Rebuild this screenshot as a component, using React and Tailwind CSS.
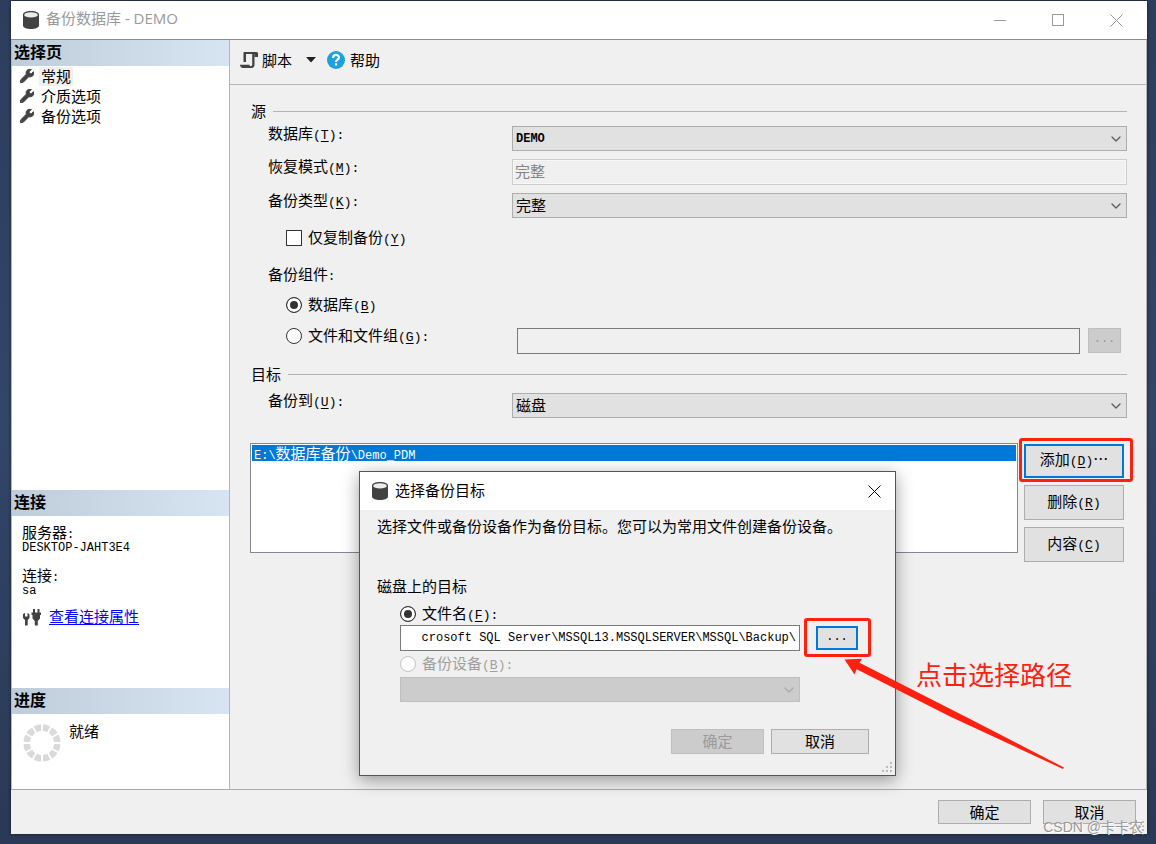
import React from "react";
import { FaWrench } from "react-icons/fa";
import { ChevronDown } from "lucide-react";

const HALF = "font-['Liberation_Mono','Noto_Sans_CJK_SC',monospace] text-[12px]";

function Half({ children }) {
  return <span className={HALF}>{children}</span>;
}

function Key({ k, colon = false }) {
  return (
    <span className="font-['Liberation_Mono',monospace] text-[13px]">
      (<span className="underline underline-offset-2">{k}</span>){colon ? ":" : ""}
    </span>
  );
}

function DatabaseIcon() {
  return (
    <svg width="16" height="18" viewBox="0 0 16 18" aria-hidden="true">
      <path d="M0 3.500C0 1.300 3.500 0 8 0s8 1.300 8 3.500v11C16 16.700 12.500 18 8 18s-8-1.300-8-3.500z" fill="#424242" />
      <ellipse cx="8" cy="3.900" rx="6.800" ry="2.700" fill="#ececec" />
    </svg>
  );
}

function ScriptIcon() {
  return (
    <svg width="18" height="18" viewBox="0 0 18 18" aria-hidden="true">
      <path d="M4 1h12.500c1 0 1.500.8 1.500 1.800V6h-3.500V3H6v8H3.500V2.500C3.500 1.500 3.500 1 4 1z" fill="#424242" />
      <path d="M12.200 3h2.300v10.500c0 2-1 3.500-3 3.500H3c-1.800 0-3-1.200-3-3.200h9.500c0 .8.600 1.400 1.400 1.400s1.300-.5 1.300-1.400z" fill="#424242" />
    </svg>
  );
}

function PlugsIcon() {
  return (
    <svg width="18" height="17" viewBox="0 0 18 17" fill="#424242" aria-hidden="true">
      <path d="M0 5l2-1v3.500h2.500V4l2 1.200V9L4.700 11v5.500H2V11L0 9z" />
      <path d="M10 0h2v3.500h2.500V0h2v3.500H18V6h-1v3.500L14.800 12v4.500h-3V12L9.500 9.500V6h-1V3.500H10z" />
    </svg>
  );
}

function Ring() {
  const pieces = Array.from({ length: 12 }, (_, i) => i * 30);
  return (
    <svg width="38" height="38" viewBox="-19 -19 38 38" aria-hidden="true">
      {pieces.map((a) => (
        <path key={a} d="M-2.200-11.800L-3.900-18Q0-19.400 3.900-18L2.200-11.800Q0-12.300-2.200-11.800z" fill="#dadada" transform={`rotate(${a + 15})`} />
      ))}
    </svg>
  );
}

function Grip() {
  return (
    <svg width="11" height="11" viewBox="0 0 11 11" fill="#bcbcbc" aria-hidden="true">
      <path d="M8 0h2v2H8zM4 4h2v2H4zM8 4h2v2H8zM0 8h2v2H0zM4 8h2v2H4zM8 8h2v2H8z" />
    </svg>
  );
}

function CloseIcon() {
  return (
    <svg width="13" height="13" viewBox="0 0 13 13" stroke="currentColor" aria-hidden="true">
      <path d="M.5.5l12 12M12.500.5l-12 12" />
    </svg>
  );
}

function Combo({ id, value, disabled = false, half = false, label }) {
  return (
    <div className="relative min-w-0 flex-1">
      <select
        id={id}
        aria-label={label}
        disabled={disabled}
        className={
          "block h-[25px] w-full appearance-none border pl-[3px] leading-[22px] text-black " +
          (disabled ? "border-[#bfbfbf] bg-[#cccccc] " : "border-[#adadad] bg-[#e1e1e1] ") +
          (half ? "font-['Liberation_Mono',monospace] text-[12px] font-bold" : "pb-0.5")
        }
      >
        <option>{value}</option>
      </select>
      <ChevronDown
        size={16}
        strokeWidth={2}
        className={"pointer-events-none absolute right-[3px] top-[5px] " + (disabled ? "text-[#aaaaaa]" : "text-[#606060]")}
      />
    </div>
  );
}

function Radio({ name, checked = false, disabled = false, children }) {
  return (
    <label className={"flex h-4 items-center gap-1.5 " + (disabled ? "text-[#a0a0a0]" : "")}>
      <input
        type="radio"
        name={name}
        defaultChecked={checked}
        disabled={disabled}
        className="size-4 shrink-0 appearance-none rounded-full border border-[#333333] bg-white checked:bg-[#333333] checked:shadow-[inset_0_0_0_3px_white] disabled:border-[#c4c4c4]"
      />
      <span>{children}</span>
    </label>
  );
}

function Push({ className = "", disabled = false, focus = false, label, children }) {
  return (
    <button
      type="button"
      disabled={disabled}
      aria-label={label}
      className={
        "flex items-center justify-center pb-0.5 " +
        (disabled
          ? "border border-[#bfbfbf] bg-[#cccccc] text-[#9a9a9a] "
          : focus
            ? "border-2 border-[#0078d7] bg-[#e1e1e1] "
            : "border border-[#adadad] bg-[#e1e1e1] ") +
        className
      }
    >
      {children}
    </button>
  );
}

function SideHeading({ children }) {
  return (
    <h2 className="h-[26px] shrink-0 bg-linear-to-r from-[#bfcddb] to-[#d7e4f2] pl-0.5 text-[16px] font-bold leading-[22px]">
      {children}
    </h2>
  );
}

function GroupHeading({ children }) {
  return (
    <div className="flex h-[17px] items-center gap-[7px] pl-px">
      <h3 className="pb-0.5">{children}</h3>
      <div className="h-px flex-1 bg-[#b4b4b4]" />
    </div>
  );
}

function Field({ id, label, k, children }) {
  return (
    <div className="flex items-start">
      <label htmlFor={id} className="w-[262px] shrink-0 pl-[18px]">
        {label}
        <Key k={k} colon />
      </label>
      {children}
    </div>
  );
}

function Sidebar() {
  return (
    <aside className="flex w-[219px] shrink-0 flex-col border-x border-[#b5b5bb] bg-white">
      <SideHeading>选择页</SideHeading>
      <nav className="flex flex-1 flex-col">
        {["常规", "介质选项", "备份选项"].map((t, i) => (
          <a key={t} href="#page" className="flex h-5 items-center gap-[5px] pl-2">
            <FaWrench size={14} stroke="currentColor" strokeWidth={36} className="text-[#424242]" />
            <span className={"px-0.5 pb-0.5 leading-[17px] " + (i === 0 ? "bg-[#f0f0f0]" : "")}>{t}</span>
          </a>
        ))}
      </nav>
      <SideHeading>连接</SideHeading>
      <section className="h-[172px] pl-2.5 pt-[9px]">
        <p className="h-4">服务器<Half>:</Half></p>
        <p className={HALF + " h-[14px] leading-[15px]"}>DESKTOP-JAHT3E4</p>
        <p className="mt-[13px] h-4">连接<Half>:</Half></p>
        <p className={HALF + " h-[14px] leading-[15px]"}>sa</p>
        <div className="mt-[11px] flex h-4 items-center gap-2 pl-px">
          <PlugsIcon />
          <a href="#properties" className="pb-[3px] text-[#0000ff] underline underline-offset-2">查看连接属性</a>
        </div>
      </section>
      <SideHeading>进度</SideHeading>
      <section className="flex h-[75px] items-start gap-2 pl-[11px] pt-[10px]">
        <Ring />
        <p className="leading-[14px]">就绪</p>
      </section>
    </aside>
  );
}

function TargetDialog() {
  return (
    <div role="dialog" aria-label="选择备份目标" className="absolute left-[348px] top-[470px] w-[537px] border border-[#555555] bg-[#f0f0f0] shadow-[0_4px_16px_rgba(0,0,0,0.38)]">
      <header className="flex h-[38px] items-center bg-white pl-3 pr-[14px]">
        <DatabaseIcon />
        <h2 className="ml-[7px] flex-1 pb-[3px]">选择备份目标</h2>
        <button type="button" aria-label="关闭"><CloseIcon /></button>
      </header>
      <div className="pb-[21px] pl-[17px] pr-[26px] pt-[9px]">
        <p className="h-4 whitespace-nowrap">选择文件或备份设备作为备份目标。您可以为常用文件创建备份设备。</p>
        <p className="mt-11 h-4">磁盘上的目标</p>
        <div className="mt-[11px] pl-[23px]">
          <Radio name="target" checked>文件名<Key k="F" colon /></Radio>
          <div className="mt-[3px] flex items-center gap-4">
            <input
              aria-label="文件名"
              defaultValue="crosoft SQL Server\MSSQL13.MSSQLSERVER\MSSQL\Backup\"
              className="h-[26px] w-[400px] border border-[#7a7a7a] bg-white pr-[3px] text-right font-['Liberation_Mono',monospace] text-[12px]"
            />
            <div className="relative">
              <Push focus label="浏览" className="h-[24px] w-[42px]"><Half>...</Half></Push>
              <div className="pointer-events-none absolute -bottom-[7px] -left-[12px] -right-[13px] -top-[8px] rounded-[3px] border-3 border-[#ff2010]" />
            </div>
          </div>
          <div className="mt-[5px]">
            <Radio name="target" disabled>备份设备<Key k="B" colon /></Radio>
          </div>
          <div className="mt-[5px] flex w-[400px]">
            <Combo label="备份设备" value="" disabled />
          </div>
        </div>
        <div className="mt-[27px] flex justify-end gap-[7px]">
          <Push disabled className="h-[25px] w-[93px]">确定</Push>
          <Push className="h-[25px] w-[98px]">取消</Push>
        </div>
      </div>
      <div className="absolute bottom-[2px] right-[2px]"><Grip /></div>
      <svg width="226" height="118" viewBox="0 0 226 118" className="pointer-events-none absolute left-[480px] top-[183px]" aria-hidden="true">
        <path d="M4.500 4.500L22 3.700L19.500 7.700L130 64L224 112.500L223 114L110 61.500L16.700 14.300L14.500 19.500z" fill="#ff2010" />
      </svg>
      <p className="absolute left-[556px] top-[186px] whitespace-nowrap text-[26px] leading-[32px] text-[#ff2010]">点击选择路径</p>
    </div>
  );
}

export default function App() {
  return (
    <div className="flex min-h-screen bg-linear-to-b from-[#2d3d5c] via-[#32466a] to-[#2a3955] pb-2.5 pl-[11px] pr-[9px] pt-px font-['Noto_Sans_CJK_SC',sans-serif] text-[15px] leading-[13px] text-black">
      <div className="relative flex min-w-0 flex-1 flex-col bg-[#f0f0f0] shadow-[0_0_3px_rgba(0,0,0,0.6)]">
        <header className="flex h-[39px] shrink-0 items-center border-b border-[#8c8c8c] bg-white pl-3 pr-6 text-[#999999]">
          <DatabaseIcon />
          <h1 className="ml-[7px] flex-1 pb-[3px] font-['Open_Sans','Noto_Sans_CJK_SC',sans-serif]">备份数据库 - DEMO</h1>
          <div className="flex items-center gap-[46px]">
            <button type="button" aria-label="最小化" className="flex h-[13px] w-3 items-center"><span className="h-px w-full bg-[#999999]" /></button>
            <button type="button" aria-label="最大化" className="size-3 border border-[#999999]" />
            <button type="button" aria-label="关闭"><CloseIcon /></button>
          </div>
        </header>
        <div className="flex flex-1 border-b border-[#aaaaaa]">
          <Sidebar />
          <main className="min-w-0 flex-1 border-r border-[#b5b5bb]">
            <div className="flex h-[45px] items-center border-b border-[#b5b5bb] pb-1 pl-2.5">
              <button type="button" className="flex items-center gap-1"><ScriptIcon /><span className="pb-0.5">脚本</span></button>
              <button type="button" aria-label="脚本选项" className="ml-[14px]">
                <svg width="10" height="6" viewBox="0 0 10 6" aria-hidden="true"><path d="M0 0h10L5 5.500z" fill="#222222" /></svg>
              </button>
              <button type="button" className="ml-[11px] flex items-center gap-[5px]">
                <svg width="18" height="18" viewBox="0 0 18 18" fill="none" aria-hidden="true">
                  <circle cx="9" cy="9" r="9" fill="#1ba1e2" />
                  <path d="M6 7c0-4 6-4 6-.5C12 8.700 9 8.500 9 11" stroke="#fff" strokeWidth="2.200" />
                  <path d="M7.900 12.300h2.200v2.200H7.900z" fill="#fff" />
                </svg>
                <span className="pb-0.5">帮助</span>
              </button>
            </div>
            <form className="pb-5 pl-5 pr-[19px] pt-[18px]">
              <GroupHeading>源</GroupHeading>
              <div className="mt-1.5 flex flex-col gap-2">
                <Field id="db" label="数据库" k="T"><Combo id="db" value="DEMO" half /></Field>
                <Field id="mode" label="恢复模式" k="M">
                  <input id="mode" disabled defaultValue="完整" className="h-[26px] min-w-0 flex-1 border border-[#cccccc] bg-[#f0f0f0] px-0.5 pb-1 text-[#838383] shadow-[inset_0_0_0_1px_#f8f8f8]" />
                </Field>
                <Field id="kind" label="备份类型" k="K"><Combo id="kind" value="完整" /></Field>
              </div>
              <label className="ml-9 mt-3 flex h-4 w-fit items-center gap-1.5">
                <input type="checkbox" className="size-4 appearance-none border border-[#333333] bg-white" />
                <span>仅复制备份<Key k="Y" /></span>
              </label>
              <p className="mt-[21px] h-4 pl-[18px]">备份组件<Half>:</Half></p>
              <div className="ml-9 mt-[14px] w-fit"><Radio name="component" checked>数据库<Key k="B" /></Radio></div>
              <div className="mt-[15px] flex items-start">
                <div className="w-[267px] shrink-0 pl-9"><Radio name="component">文件和文件组<Key k="G" colon /></Radio></div>
                <input aria-label="文件和文件组" className="h-[26px] min-w-0 flex-1 border border-[#7a7a7a] bg-[#f0f0f0] px-1" />
                <Push disabled label="浏览" className="ml-2 mr-1.5 h-[25px] w-[33px]"><Half>...</Half></Push>
              </div>
              <div className="mt-3"><GroupHeading>目标</GroupHeading></div>
              <div className="mt-2.5"><Field id="dest" label="备份到" k="U"><Combo id="dest" value="磁盘" /></Field></div>
              <div className="mt-[25px] flex items-start gap-1.5">
                <ul role="listbox" aria-label="备份到" className="h-[110px] min-w-0 flex-1 border border-[#828790] bg-white p-px">
                  <li role="option" aria-selected="true" className="h-4 bg-[#0078d7] pl-0.5 leading-[15px] text-white">
                    <Half>E:\</Half>数据库备份<Half>\Demo_PDM</Half>
                  </li>
                </ul>
                <div className="mr-[3px] flex w-[100px] flex-col gap-[7px] pt-px">
                  <div className="relative">
                    <Push focus className="h-[34px] w-full"><span>添加<Key k="D" />…</span></Push>
                    <div className="pointer-events-none absolute -bottom-1 -left-[5px] -right-[9px] -top-[6px] rounded-[3px] border-3 border-[#ff2010]" />
                  </div>
                  <Push className="h-[35px] w-full"><span>删除<Key k="R" /></span></Push>
                  <Push className="h-[35px] w-full"><span>内容<Key k="C" /></span></Push>
                </div>
              </div>
            </form>
          </main>
        </div>
        <footer className="relative flex h-[44px] shrink-0 justify-end gap-3 pr-[11px] pt-2.5">
          <Push className="h-[24px] w-[93px]">确定</Push>
          <Push className="h-[24px] w-[93px]">取消</Push>
          <div className="absolute bottom-[2px] right-[2px]"><Grip /></div>
          <p className="absolute -bottom-[2px] right-1 whitespace-nowrap font-['Liberation_Sans','Noto_Sans_CJK_SC',sans-serif] text-[14px] leading-[17px] text-[#999999] [text-shadow:1px_1px_0_white]">CSDN @卡卡农</p>
        </footer>
        <TargetDialog />
      </div>
    </div>
  );
}
